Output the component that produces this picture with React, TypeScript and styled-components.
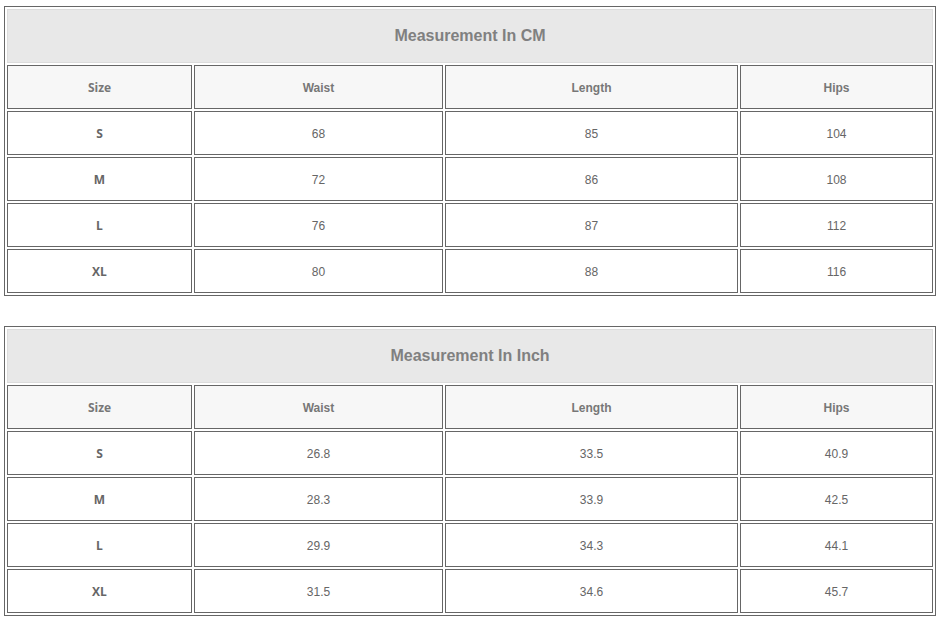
import React from 'react';
import styled, { createGlobalStyle } from 'styled-components';

const GlobalStyle = createGlobalStyle`
  body {
    margin: 0;
    background: #fff;
    font-family: Arial, "Liberation Sans", sans-serif;
  }
`;

const Page = styled.div`
  display: flex;
  flex-direction: column;
  gap: 30px;
  padding: 6px 0 0 4px;
`;

const Table = styled.table`
  width: 932px;
  border: 1px solid #666;
  border-collapse: separate;
  border-spacing: 2px;
  table-layout: fixed;
`;

const Title = styled.th`
  box-sizing: border-box;
  height: 54px;
  padding: 0;
  background: #e8e8e8;
  border: 1px solid #dcdcdc;
  color: #808080;
  font-size: 16px;
  font-weight: bold;
  text-align: center;
`;

const Cell = styled.td<{ $head?: boolean; $size?: boolean }>`
  box-sizing: border-box;
  height: 44px;
  padding: ${p => (p.$size ? '0' : '2px 0 0')};
  border: 1px solid #666;
  background: ${p => (p.$head ? '#f7f7f7' : '#fff')};
  color: ${p => (p.$head ? '#777' : '#666')};
  font-family: ${p => (p.$size ? '"Open Sans", Arial, sans-serif' : 'Arial, "Liberation Sans", sans-serif')};
  font-size: 12px;
  font-weight: ${p => (p.$head || p.$size ? 'bold' : 'normal')};
  text-align: center;
  vertical-align: middle;
`;

const widths = [185, 249, 293, 193];

type Chart = {
  title: string,
  rows: string[][],
};

const charts: Chart[] = [
  {
    title: 'Measurement In CM',
    rows: [
      ['S', '68', '85', '104'],
      ['M', '72', '86', '108'],
      ['L', '76', '87', '112'],
      ['XL', '80', '88', '116'],
    ],
  },
  {
    title: 'Measurement In Inch',
    rows: [
      ['S', '26.8', '33.5', '40.9'],
      ['M', '28.3', '33.9', '42.5'],
      ['L', '29.9', '34.3', '44.1'],
      ['XL', '31.5', '34.6', '45.7'],
    ],
  },
];

const headers = ['Size', 'Waist', 'Length', 'Hips'];

const SizeTable: React.FC<{ chart: Chart }> = ({ chart }) => (
  <Table>
    <colgroup>
      {widths.map((w, i) => <col key={i} style={{ width: w }} />)}
    </colgroup>
    <tbody>
      <tr>
        <Title colSpan={4}>{chart.title}</Title>
      </tr>
      <tr>
        {headers.map((h, i) => (
          <Cell key={h} $head $size={i === 0}>{h}</Cell>
        ))}
      </tr>
      {chart.rows.map(row => (
        <tr key={row[0]}>
          {row.map((v, i) => (
            <Cell key={i} $size={i === 0}>{v}</Cell>
          ))}
        </tr>
      ))}
    </tbody>
  </Table>
);

const App: React.FC = () => (
  <>
    <GlobalStyle />
    <Page>
      {charts.map(c => <SizeTable key={c.title} chart={c} />)}
    </Page>
  </>
);

export default App;
